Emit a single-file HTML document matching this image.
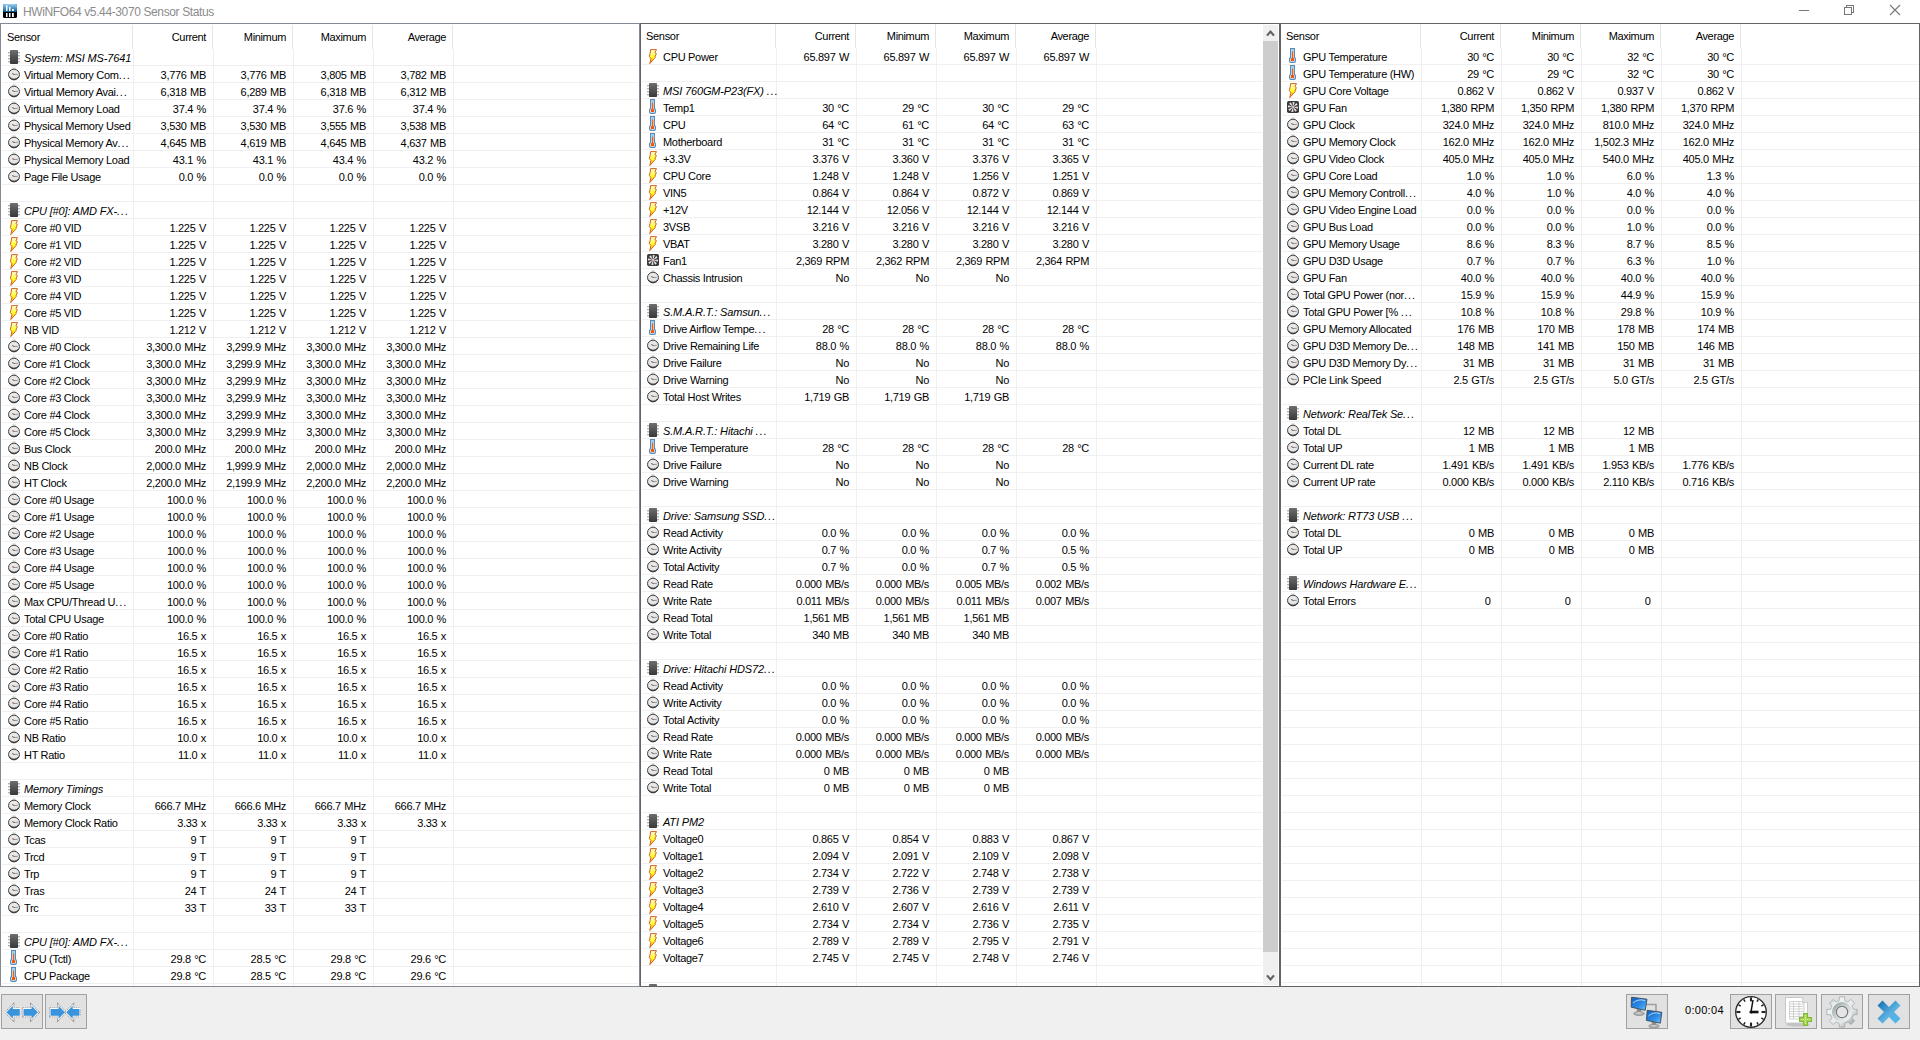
<!DOCTYPE html><html><head><meta charset="utf-8"><title>HWiNFO64 Sensor Status</title><style>html,body{margin:0;padding:0;width:1920px;height:1040px;overflow:hidden;background:#fff;position:relative;font-family:'Liberation Sans', sans-serif}.n,.v,.g,.h{position:absolute;font-size:11px;line-height:17px;height:17px;white-space:nowrap;color:#000;letter-spacing:-0.3px}.v{letter-spacing:-0.3px;word-spacing:0.7px}.h{letter-spacing:-0.35px}.g{font-style:italic;letter-spacing:-0.15px}.e{letter-spacing:1px}</style></head><body>
<svg width="0" height="0" style="position:absolute">
<defs>
<linearGradient id="chipg" x1="0" y1="0" x2="0" y2="1"><stop offset="0" stop-color="#6e6e6e"/><stop offset="1" stop-color="#383838"/></linearGradient>
<linearGradient id="boltg" x1="0" y1="0" x2="0" y2="1"><stop offset="0" stop-color="#fffbe0"/><stop offset="0.55" stop-color="#ffff20"/><stop offset="1" stop-color="#ff9a00"/></linearGradient>
<radialGradient id="clockg" cx="0.5" cy="0.4" r="0.6"><stop offset="0" stop-color="#f4f4f4"/><stop offset="1" stop-color="#d8d8d8"/></radialGradient>
<symbol id="ic" viewBox="0 0 16 16">
<rect x="5.2" y="1.3" width="3.6" height="2" rx="0.6" fill="#dadada"/>
<ellipse cx="7" cy="8.55" rx="5.5" ry="5.35" fill="url(#clockg)" stroke="#444" stroke-width="1"/>
<path d="M2.3,11 Q7,15.6 11.7,11" stroke="#1e1e1e" stroke-width="0.9" fill="none"/>
<path d="M5.2,7.6 L7.3,8.4" stroke="#4a4a4a" stroke-width="1"/>
<path d="M7.3,8.4 L10.8,8.4" stroke="#8a8a8a" stroke-width="0.9"/>
<path d="M7.3,8.4 L7.1,5.4" stroke="#f4d4c0" stroke-width="0.7"/>
<path d="M6.8,8.6 L7.9,8.6" stroke="#a06040" stroke-width="1"/>
</symbol>
<symbol id="ig" viewBox="0 0 16 16">
<g fill="#b4b4b4"><rect x="1" y="3" width="2" height="1.4"/><rect x="1" y="6" width="2" height="1.4"/><rect x="1" y="9" width="2" height="1.4"/><rect x="1" y="12" width="2" height="1.4"/>
<rect x="11" y="3" width="2" height="1.4"/><rect x="11" y="6" width="2" height="1.4"/><rect x="11" y="9" width="2" height="1.4"/><rect x="11" y="12" width="2" height="1.4"/></g>
<rect x="3" y="1" width="8" height="14" rx="0.8" fill="url(#chipg)"/>
</symbol>
<symbol id="it" viewBox="0 0 16 16">
<path d="M4.6,0.6 H8.4 V9.4 Q9.4,9.8 9.4,11 V13 Q9.4,14.4 8,14.4 H5 Q3.6,14.4 3.6,13 V11 Q3.6,9.8 4.6,9.4 Z" fill="#d4f2ff" stroke="#5a8ab4" stroke-width="1.2"/>
<rect x="5.9" y="2.2" width="1.2" height="1.8" fill="#78b0e0"/>
<rect x="5.9" y="3.9" width="1.3" height="7" fill="#ff5a00"/>
<rect x="5" y="10" width="3" height="3" rx="0.5" fill="#ff5000"/>
</symbol>
<symbol id="ib" viewBox="0 0 16 16">
<path d="M4.6,1.6 L10.5,1.6 L8.9,4.7 L10.4,5.6 L8.9,9 L9.3,9.3 L3.8,15.6 L4.9,10.6 L3.3,8.4 L4.2,5.2 Z" fill="url(#boltg)" stroke="#d4641e" stroke-width="1" stroke-linejoin="round"/>
</symbol>
<symbol id="if" viewBox="0 0 16 16">
<rect x="1" y="2" width="12" height="12" rx="1.8" fill="#3a3a3a"/>
<g fill="#e6e6e6">
<path d="M5.9,3 L8.1,3 L7.35,6.4 L6.65,6.4 Z" transform="rotate(8 7 8)"/>
<path d="M5.9,3 L8.1,3 L7.35,6.4 L6.65,6.4 Z" transform="rotate(53 7 8)"/>
<path d="M5.9,3 L8.1,3 L7.35,6.4 L6.65,6.4 Z" transform="rotate(98 7 8)"/>
<path d="M5.9,3 L8.1,3 L7.35,6.4 L6.65,6.4 Z" transform="rotate(143 7 8)"/>
<path d="M5.9,3 L8.1,3 L7.35,6.4 L6.65,6.4 Z" transform="rotate(188 7 8)"/>
<path d="M5.9,3 L8.1,3 L7.35,6.4 L6.65,6.4 Z" transform="rotate(233 7 8)"/>
<path d="M5.9,3 L8.1,3 L7.35,6.4 L6.65,6.4 Z" transform="rotate(278 7 8)"/>
<path d="M5.9,3 L8.1,3 L7.35,6.4 L6.65,6.4 Z" transform="rotate(323 7 8)"/>
</g>
<circle cx="7" cy="8" r="1.5" fill="#c8d4d4" stroke="#b87080" stroke-width="0.55"/>
</symbol>
</defs>
</svg>
<svg style="position:absolute;left:3px;top:4px" width="14" height="14" viewBox="0 0 14 14"><defs><linearGradient id="tg" x1="0" y1="0" x2="0" y2="1"><stop offset="0" stop-color="#9ad2f4"/><stop offset="1" stop-color="#0a5890"/></linearGradient></defs><rect x="0" y="0" width="14" height="14" rx="1.5" fill="#000"/><rect x="0" y="0" width="14" height="8" rx="1.5" fill="url(#tg)"/><g fill="#fff"><rect x="3" y="1.5" width="1.5" height="5.5"/><rect x="6" y="3" width="1.5" height="4"/><rect x="9" y="5" width="1.8" height="2"/><rect x="3" y="9" width="1.5" height="4"/><rect x="6" y="9" width="1.5" height="4"/><rect x="9" y="9" width="1.8" height="4"/></g></svg><div style="position:absolute;left:23px;top:4px;font-size:12px;line-height:17px;color:#8c8c8c;letter-spacing:-0.38px;white-space:nowrap">HWiNFO64 v5.44-3070 Sensor Status</div><div style="position:absolute;left:1799px;top:10px;width:10px;height:1px;background:#777"></div><div style="position:absolute;left:1846px;top:5px;width:6px;height:6px;border:1px solid #777"></div><div style="position:absolute;left:1844px;top:7px;width:6px;height:6px;border:1px solid #777;background:#fff"></div><svg style="position:absolute;left:1889px;top:4px" width="12" height="12"><path d="M1,1 L11,11 M11,1 L1,11" stroke="#777" stroke-width="1.1"/></svg><div style="position:absolute;left:132px;top:25px;width:1px;height:24px;background:#e5e5e5"></div><div style="position:absolute;left:212px;top:25px;width:1px;height:24px;background:#e5e5e5"></div><div style="position:absolute;left:292px;top:25px;width:1px;height:24px;background:#e5e5e5"></div><div style="position:absolute;left:372px;top:25px;width:1px;height:24px;background:#e5e5e5"></div><div style="position:absolute;left:452px;top:25px;width:1px;height:24px;background:#e5e5e5"></div><div class="n" style="left:7px;top:29px">Sensor</div><div class="h" style="right:1714px;top:29px">Current</div><div class="h" style="right:1634px;top:29px">Minimum</div><div class="h" style="right:1554px;top:29px">Maximum</div><div class="h" style="right:1474px;top:29px">Average</div><div style="position:absolute;left:2px;top:65px;width:636px;height:921px;background:repeating-linear-gradient(to bottom,#f0f0f0 0 1px,transparent 1px 17px)"></div><div style="position:absolute;left:133px;top:49px;width:1px;height:937px;background:#f0f0f0"></div><div style="position:absolute;left:213px;top:49px;width:1px;height:937px;background:#f0f0f0"></div><div style="position:absolute;left:293px;top:49px;width:1px;height:937px;background:#f0f0f0"></div><div style="position:absolute;left:373px;top:49px;width:1px;height:937px;background:#f0f0f0"></div><div style="position:absolute;left:453px;top:49px;width:1px;height:937px;background:#f0f0f0"></div><svg style="position:absolute;left:7px;top:49px" width="16" height="16"><use href="#ig"/></svg><div class="g" style="left:24px;top:50px">System: MSI MS-7641</div><svg style="position:absolute;left:7px;top:66px" width="16" height="16"><use href="#ic"/></svg><div class="n" style="left:24px;top:67px">Virtual Memory Com<span class="e">...</span></div><div class="v" style="right:1714px;top:67px">3,776 MB</div><div class="v" style="right:1634px;top:67px">3,776 MB</div><div class="v" style="right:1554px;top:67px">3,805 MB</div><div class="v" style="right:1474px;top:67px">3,782 MB</div><svg style="position:absolute;left:7px;top:83px" width="16" height="16"><use href="#ic"/></svg><div class="n" style="left:24px;top:84px">Virtual Memory Avai<span class="e">...</span></div><div class="v" style="right:1714px;top:84px">6,318 MB</div><div class="v" style="right:1634px;top:84px">6,289 MB</div><div class="v" style="right:1554px;top:84px">6,318 MB</div><div class="v" style="right:1474px;top:84px">6,312 MB</div><svg style="position:absolute;left:7px;top:100px" width="16" height="16"><use href="#ic"/></svg><div class="n" style="left:24px;top:101px">Virtual Memory Load</div><div class="v" style="right:1714px;top:101px">37.4 %</div><div class="v" style="right:1634px;top:101px">37.4 %</div><div class="v" style="right:1554px;top:101px">37.6 %</div><div class="v" style="right:1474px;top:101px">37.4 %</div><svg style="position:absolute;left:7px;top:117px" width="16" height="16"><use href="#ic"/></svg><div class="n" style="left:24px;top:118px">Physical Memory Used</div><div class="v" style="right:1714px;top:118px">3,530 MB</div><div class="v" style="right:1634px;top:118px">3,530 MB</div><div class="v" style="right:1554px;top:118px">3,555 MB</div><div class="v" style="right:1474px;top:118px">3,538 MB</div><svg style="position:absolute;left:7px;top:134px" width="16" height="16"><use href="#ic"/></svg><div class="n" style="left:24px;top:135px">Physical Memory Av<span class="e">...</span></div><div class="v" style="right:1714px;top:135px">4,645 MB</div><div class="v" style="right:1634px;top:135px">4,619 MB</div><div class="v" style="right:1554px;top:135px">4,645 MB</div><div class="v" style="right:1474px;top:135px">4,637 MB</div><svg style="position:absolute;left:7px;top:151px" width="16" height="16"><use href="#ic"/></svg><div class="n" style="left:24px;top:152px">Physical Memory Load</div><div class="v" style="right:1714px;top:152px">43.1 %</div><div class="v" style="right:1634px;top:152px">43.1 %</div><div class="v" style="right:1554px;top:152px">43.4 %</div><div class="v" style="right:1474px;top:152px">43.2 %</div><svg style="position:absolute;left:7px;top:168px" width="16" height="16"><use href="#ic"/></svg><div class="n" style="left:24px;top:169px">Page File Usage</div><div class="v" style="right:1714px;top:169px">0.0 %</div><div class="v" style="right:1634px;top:169px">0.0 %</div><div class="v" style="right:1554px;top:169px">0.0 %</div><div class="v" style="right:1474px;top:169px">0.0 %</div><svg style="position:absolute;left:7px;top:202px" width="16" height="16"><use href="#ig"/></svg><div class="g" style="left:24px;top:203px">CPU [#0]: AMD FX-<span class="e">...</span></div><svg style="position:absolute;left:7px;top:219px" width="16" height="16"><use href="#ib"/></svg><div class="n" style="left:24px;top:220px">Core #0 VID</div><div class="v" style="right:1714px;top:220px">1.225 V</div><div class="v" style="right:1634px;top:220px">1.225 V</div><div class="v" style="right:1554px;top:220px">1.225 V</div><div class="v" style="right:1474px;top:220px">1.225 V</div><svg style="position:absolute;left:7px;top:236px" width="16" height="16"><use href="#ib"/></svg><div class="n" style="left:24px;top:237px">Core #1 VID</div><div class="v" style="right:1714px;top:237px">1.225 V</div><div class="v" style="right:1634px;top:237px">1.225 V</div><div class="v" style="right:1554px;top:237px">1.225 V</div><div class="v" style="right:1474px;top:237px">1.225 V</div><svg style="position:absolute;left:7px;top:253px" width="16" height="16"><use href="#ib"/></svg><div class="n" style="left:24px;top:254px">Core #2 VID</div><div class="v" style="right:1714px;top:254px">1.225 V</div><div class="v" style="right:1634px;top:254px">1.225 V</div><div class="v" style="right:1554px;top:254px">1.225 V</div><div class="v" style="right:1474px;top:254px">1.225 V</div><svg style="position:absolute;left:7px;top:270px" width="16" height="16"><use href="#ib"/></svg><div class="n" style="left:24px;top:271px">Core #3 VID</div><div class="v" style="right:1714px;top:271px">1.225 V</div><div class="v" style="right:1634px;top:271px">1.225 V</div><div class="v" style="right:1554px;top:271px">1.225 V</div><div class="v" style="right:1474px;top:271px">1.225 V</div><svg style="position:absolute;left:7px;top:287px" width="16" height="16"><use href="#ib"/></svg><div class="n" style="left:24px;top:288px">Core #4 VID</div><div class="v" style="right:1714px;top:288px">1.225 V</div><div class="v" style="right:1634px;top:288px">1.225 V</div><div class="v" style="right:1554px;top:288px">1.225 V</div><div class="v" style="right:1474px;top:288px">1.225 V</div><svg style="position:absolute;left:7px;top:304px" width="16" height="16"><use href="#ib"/></svg><div class="n" style="left:24px;top:305px">Core #5 VID</div><div class="v" style="right:1714px;top:305px">1.225 V</div><div class="v" style="right:1634px;top:305px">1.225 V</div><div class="v" style="right:1554px;top:305px">1.225 V</div><div class="v" style="right:1474px;top:305px">1.225 V</div><svg style="position:absolute;left:7px;top:321px" width="16" height="16"><use href="#ib"/></svg><div class="n" style="left:24px;top:322px">NB VID</div><div class="v" style="right:1714px;top:322px">1.212 V</div><div class="v" style="right:1634px;top:322px">1.212 V</div><div class="v" style="right:1554px;top:322px">1.212 V</div><div class="v" style="right:1474px;top:322px">1.212 V</div><svg style="position:absolute;left:7px;top:338px" width="16" height="16"><use href="#ic"/></svg><div class="n" style="left:24px;top:339px">Core #0 Clock</div><div class="v" style="right:1714px;top:339px">3,300.0 MHz</div><div class="v" style="right:1634px;top:339px">3,299.9 MHz</div><div class="v" style="right:1554px;top:339px">3,300.0 MHz</div><div class="v" style="right:1474px;top:339px">3,300.0 MHz</div><svg style="position:absolute;left:7px;top:355px" width="16" height="16"><use href="#ic"/></svg><div class="n" style="left:24px;top:356px">Core #1 Clock</div><div class="v" style="right:1714px;top:356px">3,300.0 MHz</div><div class="v" style="right:1634px;top:356px">3,299.9 MHz</div><div class="v" style="right:1554px;top:356px">3,300.0 MHz</div><div class="v" style="right:1474px;top:356px">3,300.0 MHz</div><svg style="position:absolute;left:7px;top:372px" width="16" height="16"><use href="#ic"/></svg><div class="n" style="left:24px;top:373px">Core #2 Clock</div><div class="v" style="right:1714px;top:373px">3,300.0 MHz</div><div class="v" style="right:1634px;top:373px">3,299.9 MHz</div><div class="v" style="right:1554px;top:373px">3,300.0 MHz</div><div class="v" style="right:1474px;top:373px">3,300.0 MHz</div><svg style="position:absolute;left:7px;top:389px" width="16" height="16"><use href="#ic"/></svg><div class="n" style="left:24px;top:390px">Core #3 Clock</div><div class="v" style="right:1714px;top:390px">3,300.0 MHz</div><div class="v" style="right:1634px;top:390px">3,299.9 MHz</div><div class="v" style="right:1554px;top:390px">3,300.0 MHz</div><div class="v" style="right:1474px;top:390px">3,300.0 MHz</div><svg style="position:absolute;left:7px;top:406px" width="16" height="16"><use href="#ic"/></svg><div class="n" style="left:24px;top:407px">Core #4 Clock</div><div class="v" style="right:1714px;top:407px">3,300.0 MHz</div><div class="v" style="right:1634px;top:407px">3,299.9 MHz</div><div class="v" style="right:1554px;top:407px">3,300.0 MHz</div><div class="v" style="right:1474px;top:407px">3,300.0 MHz</div><svg style="position:absolute;left:7px;top:423px" width="16" height="16"><use href="#ic"/></svg><div class="n" style="left:24px;top:424px">Core #5 Clock</div><div class="v" style="right:1714px;top:424px">3,300.0 MHz</div><div class="v" style="right:1634px;top:424px">3,299.9 MHz</div><div class="v" style="right:1554px;top:424px">3,300.0 MHz</div><div class="v" style="right:1474px;top:424px">3,300.0 MHz</div><svg style="position:absolute;left:7px;top:440px" width="16" height="16"><use href="#ic"/></svg><div class="n" style="left:24px;top:441px">Bus Clock</div><div class="v" style="right:1714px;top:441px">200.0 MHz</div><div class="v" style="right:1634px;top:441px">200.0 MHz</div><div class="v" style="right:1554px;top:441px">200.0 MHz</div><div class="v" style="right:1474px;top:441px">200.0 MHz</div><svg style="position:absolute;left:7px;top:457px" width="16" height="16"><use href="#ic"/></svg><div class="n" style="left:24px;top:458px">NB Clock</div><div class="v" style="right:1714px;top:458px">2,000.0 MHz</div><div class="v" style="right:1634px;top:458px">1,999.9 MHz</div><div class="v" style="right:1554px;top:458px">2,000.0 MHz</div><div class="v" style="right:1474px;top:458px">2,000.0 MHz</div><svg style="position:absolute;left:7px;top:474px" width="16" height="16"><use href="#ic"/></svg><div class="n" style="left:24px;top:475px">HT Clock</div><div class="v" style="right:1714px;top:475px">2,200.0 MHz</div><div class="v" style="right:1634px;top:475px">2,199.9 MHz</div><div class="v" style="right:1554px;top:475px">2,200.0 MHz</div><div class="v" style="right:1474px;top:475px">2,200.0 MHz</div><svg style="position:absolute;left:7px;top:491px" width="16" height="16"><use href="#ic"/></svg><div class="n" style="left:24px;top:492px">Core #0 Usage</div><div class="v" style="right:1714px;top:492px">100.0 %</div><div class="v" style="right:1634px;top:492px">100.0 %</div><div class="v" style="right:1554px;top:492px">100.0 %</div><div class="v" style="right:1474px;top:492px">100.0 %</div><svg style="position:absolute;left:7px;top:508px" width="16" height="16"><use href="#ic"/></svg><div class="n" style="left:24px;top:509px">Core #1 Usage</div><div class="v" style="right:1714px;top:509px">100.0 %</div><div class="v" style="right:1634px;top:509px">100.0 %</div><div class="v" style="right:1554px;top:509px">100.0 %</div><div class="v" style="right:1474px;top:509px">100.0 %</div><svg style="position:absolute;left:7px;top:525px" width="16" height="16"><use href="#ic"/></svg><div class="n" style="left:24px;top:526px">Core #2 Usage</div><div class="v" style="right:1714px;top:526px">100.0 %</div><div class="v" style="right:1634px;top:526px">100.0 %</div><div class="v" style="right:1554px;top:526px">100.0 %</div><div class="v" style="right:1474px;top:526px">100.0 %</div><svg style="position:absolute;left:7px;top:542px" width="16" height="16"><use href="#ic"/></svg><div class="n" style="left:24px;top:543px">Core #3 Usage</div><div class="v" style="right:1714px;top:543px">100.0 %</div><div class="v" style="right:1634px;top:543px">100.0 %</div><div class="v" style="right:1554px;top:543px">100.0 %</div><div class="v" style="right:1474px;top:543px">100.0 %</div><svg style="position:absolute;left:7px;top:559px" width="16" height="16"><use href="#ic"/></svg><div class="n" style="left:24px;top:560px">Core #4 Usage</div><div class="v" style="right:1714px;top:560px">100.0 %</div><div class="v" style="right:1634px;top:560px">100.0 %</div><div class="v" style="right:1554px;top:560px">100.0 %</div><div class="v" style="right:1474px;top:560px">100.0 %</div><svg style="position:absolute;left:7px;top:576px" width="16" height="16"><use href="#ic"/></svg><div class="n" style="left:24px;top:577px">Core #5 Usage</div><div class="v" style="right:1714px;top:577px">100.0 %</div><div class="v" style="right:1634px;top:577px">100.0 %</div><div class="v" style="right:1554px;top:577px">100.0 %</div><div class="v" style="right:1474px;top:577px">100.0 %</div><svg style="position:absolute;left:7px;top:593px" width="16" height="16"><use href="#ic"/></svg><div class="n" style="left:24px;top:594px">Max CPU/Thread U<span class="e">...</span></div><div class="v" style="right:1714px;top:594px">100.0 %</div><div class="v" style="right:1634px;top:594px">100.0 %</div><div class="v" style="right:1554px;top:594px">100.0 %</div><div class="v" style="right:1474px;top:594px">100.0 %</div><svg style="position:absolute;left:7px;top:610px" width="16" height="16"><use href="#ic"/></svg><div class="n" style="left:24px;top:611px">Total CPU Usage</div><div class="v" style="right:1714px;top:611px">100.0 %</div><div class="v" style="right:1634px;top:611px">100.0 %</div><div class="v" style="right:1554px;top:611px">100.0 %</div><div class="v" style="right:1474px;top:611px">100.0 %</div><svg style="position:absolute;left:7px;top:627px" width="16" height="16"><use href="#ic"/></svg><div class="n" style="left:24px;top:628px">Core #0 Ratio</div><div class="v" style="right:1714px;top:628px">16.5 x</div><div class="v" style="right:1634px;top:628px">16.5 x</div><div class="v" style="right:1554px;top:628px">16.5 x</div><div class="v" style="right:1474px;top:628px">16.5 x</div><svg style="position:absolute;left:7px;top:644px" width="16" height="16"><use href="#ic"/></svg><div class="n" style="left:24px;top:645px">Core #1 Ratio</div><div class="v" style="right:1714px;top:645px">16.5 x</div><div class="v" style="right:1634px;top:645px">16.5 x</div><div class="v" style="right:1554px;top:645px">16.5 x</div><div class="v" style="right:1474px;top:645px">16.5 x</div><svg style="position:absolute;left:7px;top:661px" width="16" height="16"><use href="#ic"/></svg><div class="n" style="left:24px;top:662px">Core #2 Ratio</div><div class="v" style="right:1714px;top:662px">16.5 x</div><div class="v" style="right:1634px;top:662px">16.5 x</div><div class="v" style="right:1554px;top:662px">16.5 x</div><div class="v" style="right:1474px;top:662px">16.5 x</div><svg style="position:absolute;left:7px;top:678px" width="16" height="16"><use href="#ic"/></svg><div class="n" style="left:24px;top:679px">Core #3 Ratio</div><div class="v" style="right:1714px;top:679px">16.5 x</div><div class="v" style="right:1634px;top:679px">16.5 x</div><div class="v" style="right:1554px;top:679px">16.5 x</div><div class="v" style="right:1474px;top:679px">16.5 x</div><svg style="position:absolute;left:7px;top:695px" width="16" height="16"><use href="#ic"/></svg><div class="n" style="left:24px;top:696px">Core #4 Ratio</div><div class="v" style="right:1714px;top:696px">16.5 x</div><div class="v" style="right:1634px;top:696px">16.5 x</div><div class="v" style="right:1554px;top:696px">16.5 x</div><div class="v" style="right:1474px;top:696px">16.5 x</div><svg style="position:absolute;left:7px;top:712px" width="16" height="16"><use href="#ic"/></svg><div class="n" style="left:24px;top:713px">Core #5 Ratio</div><div class="v" style="right:1714px;top:713px">16.5 x</div><div class="v" style="right:1634px;top:713px">16.5 x</div><div class="v" style="right:1554px;top:713px">16.5 x</div><div class="v" style="right:1474px;top:713px">16.5 x</div><svg style="position:absolute;left:7px;top:729px" width="16" height="16"><use href="#ic"/></svg><div class="n" style="left:24px;top:730px">NB Ratio</div><div class="v" style="right:1714px;top:730px">10.0 x</div><div class="v" style="right:1634px;top:730px">10.0 x</div><div class="v" style="right:1554px;top:730px">10.0 x</div><div class="v" style="right:1474px;top:730px">10.0 x</div><svg style="position:absolute;left:7px;top:746px" width="16" height="16"><use href="#ic"/></svg><div class="n" style="left:24px;top:747px">HT Ratio</div><div class="v" style="right:1714px;top:747px">11.0 x</div><div class="v" style="right:1634px;top:747px">11.0 x</div><div class="v" style="right:1554px;top:747px">11.0 x</div><div class="v" style="right:1474px;top:747px">11.0 x</div><svg style="position:absolute;left:7px;top:780px" width="16" height="16"><use href="#ig"/></svg><div class="g" style="left:24px;top:781px">Memory Timings</div><svg style="position:absolute;left:7px;top:797px" width="16" height="16"><use href="#ic"/></svg><div class="n" style="left:24px;top:798px">Memory Clock</div><div class="v" style="right:1714px;top:798px">666.7 MHz</div><div class="v" style="right:1634px;top:798px">666.6 MHz</div><div class="v" style="right:1554px;top:798px">666.7 MHz</div><div class="v" style="right:1474px;top:798px">666.7 MHz</div><svg style="position:absolute;left:7px;top:814px" width="16" height="16"><use href="#ic"/></svg><div class="n" style="left:24px;top:815px">Memory Clock Ratio</div><div class="v" style="right:1714px;top:815px">3.33 x</div><div class="v" style="right:1634px;top:815px">3.33 x</div><div class="v" style="right:1554px;top:815px">3.33 x</div><div class="v" style="right:1474px;top:815px">3.33 x</div><svg style="position:absolute;left:7px;top:831px" width="16" height="16"><use href="#ic"/></svg><div class="n" style="left:24px;top:832px">Tcas</div><div class="v" style="right:1714px;top:832px">9 T</div><div class="v" style="right:1634px;top:832px">9 T</div><div class="v" style="right:1554px;top:832px">9 T</div><svg style="position:absolute;left:7px;top:848px" width="16" height="16"><use href="#ic"/></svg><div class="n" style="left:24px;top:849px">Trcd</div><div class="v" style="right:1714px;top:849px">9 T</div><div class="v" style="right:1634px;top:849px">9 T</div><div class="v" style="right:1554px;top:849px">9 T</div><svg style="position:absolute;left:7px;top:865px" width="16" height="16"><use href="#ic"/></svg><div class="n" style="left:24px;top:866px">Trp</div><div class="v" style="right:1714px;top:866px">9 T</div><div class="v" style="right:1634px;top:866px">9 T</div><div class="v" style="right:1554px;top:866px">9 T</div><svg style="position:absolute;left:7px;top:882px" width="16" height="16"><use href="#ic"/></svg><div class="n" style="left:24px;top:883px">Tras</div><div class="v" style="right:1714px;top:883px">24 T</div><div class="v" style="right:1634px;top:883px">24 T</div><div class="v" style="right:1554px;top:883px">24 T</div><svg style="position:absolute;left:7px;top:899px" width="16" height="16"><use href="#ic"/></svg><div class="n" style="left:24px;top:900px">Trc</div><div class="v" style="right:1714px;top:900px">33 T</div><div class="v" style="right:1634px;top:900px">33 T</div><div class="v" style="right:1554px;top:900px">33 T</div><svg style="position:absolute;left:7px;top:933px" width="16" height="16"><use href="#ig"/></svg><div class="g" style="left:24px;top:934px">CPU [#0]: AMD FX-<span class="e">...</span></div><svg style="position:absolute;left:7px;top:950px" width="16" height="16"><use href="#it"/></svg><div class="n" style="left:24px;top:951px">CPU (Tctl)</div><div class="v" style="right:1714px;top:951px">29.8 °C</div><div class="v" style="right:1634px;top:951px">28.5 °C</div><div class="v" style="right:1554px;top:951px">29.8 °C</div><div class="v" style="right:1474px;top:951px">29.6 °C</div><svg style="position:absolute;left:7px;top:967px" width="16" height="16"><use href="#it"/></svg><div class="n" style="left:24px;top:968px">CPU Package</div><div class="v" style="right:1714px;top:968px">29.8 °C</div><div class="v" style="right:1634px;top:968px">28.5 °C</div><div class="v" style="right:1554px;top:968px">29.8 °C</div><div class="v" style="right:1474px;top:968px">29.6 °C</div><div style="position:absolute;left:775px;top:24px;width:1px;height:24px;background:#e5e5e5"></div><div style="position:absolute;left:855px;top:24px;width:1px;height:24px;background:#e5e5e5"></div><div style="position:absolute;left:935px;top:24px;width:1px;height:24px;background:#e5e5e5"></div><div style="position:absolute;left:1015px;top:24px;width:1px;height:24px;background:#e5e5e5"></div><div style="position:absolute;left:1095px;top:24px;width:1px;height:24px;background:#e5e5e5"></div><div class="n" style="left:646px;top:28px">Sensor</div><div class="h" style="right:1071px;top:28px">Current</div><div class="h" style="right:991px;top:28px">Minimum</div><div class="h" style="right:911px;top:28px">Maximum</div><div class="h" style="right:831px;top:28px">Average</div><div style="position:absolute;left:642px;top:64px;width:620px;height:922px;background:repeating-linear-gradient(to bottom,#f0f0f0 0 1px,transparent 1px 17px)"></div><div style="position:absolute;left:776px;top:48px;width:1px;height:938px;background:#f0f0f0"></div><div style="position:absolute;left:856px;top:48px;width:1px;height:938px;background:#f0f0f0"></div><div style="position:absolute;left:936px;top:48px;width:1px;height:938px;background:#f0f0f0"></div><div style="position:absolute;left:1016px;top:48px;width:1px;height:938px;background:#f0f0f0"></div><div style="position:absolute;left:1096px;top:48px;width:1px;height:938px;background:#f0f0f0"></div><svg style="position:absolute;left:646px;top:48px" width="16" height="16"><use href="#ib"/></svg><div class="n" style="left:663px;top:49px">CPU Power</div><div class="v" style="right:1071px;top:49px">65.897 W</div><div class="v" style="right:991px;top:49px">65.897 W</div><div class="v" style="right:911px;top:49px">65.897 W</div><div class="v" style="right:831px;top:49px">65.897 W</div><svg style="position:absolute;left:646px;top:82px" width="16" height="16"><use href="#ig"/></svg><div class="g" style="left:663px;top:83px">MSI 760GM-P23(FX) <span class="e">...</span></div><svg style="position:absolute;left:646px;top:99px" width="16" height="16"><use href="#it"/></svg><div class="n" style="left:663px;top:100px">Temp1</div><div class="v" style="right:1071px;top:100px">30 °C</div><div class="v" style="right:991px;top:100px">29 °C</div><div class="v" style="right:911px;top:100px">30 °C</div><div class="v" style="right:831px;top:100px">29 °C</div><svg style="position:absolute;left:646px;top:116px" width="16" height="16"><use href="#it"/></svg><div class="n" style="left:663px;top:117px">CPU</div><div class="v" style="right:1071px;top:117px">64 °C</div><div class="v" style="right:991px;top:117px">61 °C</div><div class="v" style="right:911px;top:117px">64 °C</div><div class="v" style="right:831px;top:117px">63 °C</div><svg style="position:absolute;left:646px;top:133px" width="16" height="16"><use href="#it"/></svg><div class="n" style="left:663px;top:134px">Motherboard</div><div class="v" style="right:1071px;top:134px">31 °C</div><div class="v" style="right:991px;top:134px">31 °C</div><div class="v" style="right:911px;top:134px">31 °C</div><div class="v" style="right:831px;top:134px">31 °C</div><svg style="position:absolute;left:646px;top:150px" width="16" height="16"><use href="#ib"/></svg><div class="n" style="left:663px;top:151px">+3.3V</div><div class="v" style="right:1071px;top:151px">3.376 V</div><div class="v" style="right:991px;top:151px">3.360 V</div><div class="v" style="right:911px;top:151px">3.376 V</div><div class="v" style="right:831px;top:151px">3.365 V</div><svg style="position:absolute;left:646px;top:167px" width="16" height="16"><use href="#ib"/></svg><div class="n" style="left:663px;top:168px">CPU Core</div><div class="v" style="right:1071px;top:168px">1.248 V</div><div class="v" style="right:991px;top:168px">1.248 V</div><div class="v" style="right:911px;top:168px">1.256 V</div><div class="v" style="right:831px;top:168px">1.251 V</div><svg style="position:absolute;left:646px;top:184px" width="16" height="16"><use href="#ib"/></svg><div class="n" style="left:663px;top:185px">VIN5</div><div class="v" style="right:1071px;top:185px">0.864 V</div><div class="v" style="right:991px;top:185px">0.864 V</div><div class="v" style="right:911px;top:185px">0.872 V</div><div class="v" style="right:831px;top:185px">0.869 V</div><svg style="position:absolute;left:646px;top:201px" width="16" height="16"><use href="#ib"/></svg><div class="n" style="left:663px;top:202px">+12V</div><div class="v" style="right:1071px;top:202px">12.144 V</div><div class="v" style="right:991px;top:202px">12.056 V</div><div class="v" style="right:911px;top:202px">12.144 V</div><div class="v" style="right:831px;top:202px">12.144 V</div><svg style="position:absolute;left:646px;top:218px" width="16" height="16"><use href="#ib"/></svg><div class="n" style="left:663px;top:219px">3VSB</div><div class="v" style="right:1071px;top:219px">3.216 V</div><div class="v" style="right:991px;top:219px">3.216 V</div><div class="v" style="right:911px;top:219px">3.216 V</div><div class="v" style="right:831px;top:219px">3.216 V</div><svg style="position:absolute;left:646px;top:235px" width="16" height="16"><use href="#ib"/></svg><div class="n" style="left:663px;top:236px">VBAT</div><div class="v" style="right:1071px;top:236px">3.280 V</div><div class="v" style="right:991px;top:236px">3.280 V</div><div class="v" style="right:911px;top:236px">3.280 V</div><div class="v" style="right:831px;top:236px">3.280 V</div><svg style="position:absolute;left:646px;top:252px" width="16" height="16"><use href="#if"/></svg><div class="n" style="left:663px;top:253px">Fan1</div><div class="v" style="right:1071px;top:253px">2,369 RPM</div><div class="v" style="right:991px;top:253px">2,362 RPM</div><div class="v" style="right:911px;top:253px">2,369 RPM</div><div class="v" style="right:831px;top:253px">2,364 RPM</div><svg style="position:absolute;left:646px;top:269px" width="16" height="16"><use href="#ic"/></svg><div class="n" style="left:663px;top:270px">Chassis Intrusion</div><div class="v" style="right:1071px;top:270px">No</div><div class="v" style="right:991px;top:270px">No</div><div class="v" style="right:911px;top:270px">No</div><svg style="position:absolute;left:646px;top:303px" width="16" height="16"><use href="#ig"/></svg><div class="g" style="left:663px;top:304px">S.M.A.R.T.: Samsun<span class="e">...</span></div><svg style="position:absolute;left:646px;top:320px" width="16" height="16"><use href="#it"/></svg><div class="n" style="left:663px;top:321px">Drive Airflow Tempe<span class="e">...</span></div><div class="v" style="right:1071px;top:321px">28 °C</div><div class="v" style="right:991px;top:321px">28 °C</div><div class="v" style="right:911px;top:321px">28 °C</div><div class="v" style="right:831px;top:321px">28 °C</div><svg style="position:absolute;left:646px;top:337px" width="16" height="16"><use href="#ic"/></svg><div class="n" style="left:663px;top:338px">Drive Remaining Life</div><div class="v" style="right:1071px;top:338px">88.0 %</div><div class="v" style="right:991px;top:338px">88.0 %</div><div class="v" style="right:911px;top:338px">88.0 %</div><div class="v" style="right:831px;top:338px">88.0 %</div><svg style="position:absolute;left:646px;top:354px" width="16" height="16"><use href="#ic"/></svg><div class="n" style="left:663px;top:355px">Drive Failure</div><div class="v" style="right:1071px;top:355px">No</div><div class="v" style="right:991px;top:355px">No</div><div class="v" style="right:911px;top:355px">No</div><svg style="position:absolute;left:646px;top:371px" width="16" height="16"><use href="#ic"/></svg><div class="n" style="left:663px;top:372px">Drive Warning</div><div class="v" style="right:1071px;top:372px">No</div><div class="v" style="right:991px;top:372px">No</div><div class="v" style="right:911px;top:372px">No</div><svg style="position:absolute;left:646px;top:388px" width="16" height="16"><use href="#ic"/></svg><div class="n" style="left:663px;top:389px">Total Host Writes</div><div class="v" style="right:1071px;top:389px">1,719 GB</div><div class="v" style="right:991px;top:389px">1,719 GB</div><div class="v" style="right:911px;top:389px">1,719 GB</div><svg style="position:absolute;left:646px;top:422px" width="16" height="16"><use href="#ig"/></svg><div class="g" style="left:663px;top:423px">S.M.A.R.T.: Hitachi <span class="e">...</span></div><svg style="position:absolute;left:646px;top:439px" width="16" height="16"><use href="#it"/></svg><div class="n" style="left:663px;top:440px">Drive Temperature</div><div class="v" style="right:1071px;top:440px">28 °C</div><div class="v" style="right:991px;top:440px">28 °C</div><div class="v" style="right:911px;top:440px">28 °C</div><div class="v" style="right:831px;top:440px">28 °C</div><svg style="position:absolute;left:646px;top:456px" width="16" height="16"><use href="#ic"/></svg><div class="n" style="left:663px;top:457px">Drive Failure</div><div class="v" style="right:1071px;top:457px">No</div><div class="v" style="right:991px;top:457px">No</div><div class="v" style="right:911px;top:457px">No</div><svg style="position:absolute;left:646px;top:473px" width="16" height="16"><use href="#ic"/></svg><div class="n" style="left:663px;top:474px">Drive Warning</div><div class="v" style="right:1071px;top:474px">No</div><div class="v" style="right:991px;top:474px">No</div><div class="v" style="right:911px;top:474px">No</div><svg style="position:absolute;left:646px;top:507px" width="16" height="16"><use href="#ig"/></svg><div class="g" style="left:663px;top:508px">Drive: Samsung SSD<span class="e">...</span></div><svg style="position:absolute;left:646px;top:524px" width="16" height="16"><use href="#ic"/></svg><div class="n" style="left:663px;top:525px">Read Activity</div><div class="v" style="right:1071px;top:525px">0.0 %</div><div class="v" style="right:991px;top:525px">0.0 %</div><div class="v" style="right:911px;top:525px">0.0 %</div><div class="v" style="right:831px;top:525px">0.0 %</div><svg style="position:absolute;left:646px;top:541px" width="16" height="16"><use href="#ic"/></svg><div class="n" style="left:663px;top:542px">Write Activity</div><div class="v" style="right:1071px;top:542px">0.7 %</div><div class="v" style="right:991px;top:542px">0.0 %</div><div class="v" style="right:911px;top:542px">0.7 %</div><div class="v" style="right:831px;top:542px">0.5 %</div><svg style="position:absolute;left:646px;top:558px" width="16" height="16"><use href="#ic"/></svg><div class="n" style="left:663px;top:559px">Total Activity</div><div class="v" style="right:1071px;top:559px">0.7 %</div><div class="v" style="right:991px;top:559px">0.0 %</div><div class="v" style="right:911px;top:559px">0.7 %</div><div class="v" style="right:831px;top:559px">0.5 %</div><svg style="position:absolute;left:646px;top:575px" width="16" height="16"><use href="#ic"/></svg><div class="n" style="left:663px;top:576px">Read Rate</div><div class="v" style="right:1071px;top:576px">0.000 MB/s</div><div class="v" style="right:991px;top:576px">0.000 MB/s</div><div class="v" style="right:911px;top:576px">0.005 MB/s</div><div class="v" style="right:831px;top:576px">0.002 MB/s</div><svg style="position:absolute;left:646px;top:592px" width="16" height="16"><use href="#ic"/></svg><div class="n" style="left:663px;top:593px">Write Rate</div><div class="v" style="right:1071px;top:593px">0.011 MB/s</div><div class="v" style="right:991px;top:593px">0.000 MB/s</div><div class="v" style="right:911px;top:593px">0.011 MB/s</div><div class="v" style="right:831px;top:593px">0.007 MB/s</div><svg style="position:absolute;left:646px;top:609px" width="16" height="16"><use href="#ic"/></svg><div class="n" style="left:663px;top:610px">Read Total</div><div class="v" style="right:1071px;top:610px">1,561 MB</div><div class="v" style="right:991px;top:610px">1,561 MB</div><div class="v" style="right:911px;top:610px">1,561 MB</div><svg style="position:absolute;left:646px;top:626px" width="16" height="16"><use href="#ic"/></svg><div class="n" style="left:663px;top:627px">Write Total</div><div class="v" style="right:1071px;top:627px">340 MB</div><div class="v" style="right:991px;top:627px">340 MB</div><div class="v" style="right:911px;top:627px">340 MB</div><svg style="position:absolute;left:646px;top:660px" width="16" height="16"><use href="#ig"/></svg><div class="g" style="left:663px;top:661px">Drive: Hitachi HDS72<span class="e">...</span></div><svg style="position:absolute;left:646px;top:677px" width="16" height="16"><use href="#ic"/></svg><div class="n" style="left:663px;top:678px">Read Activity</div><div class="v" style="right:1071px;top:678px">0.0 %</div><div class="v" style="right:991px;top:678px">0.0 %</div><div class="v" style="right:911px;top:678px">0.0 %</div><div class="v" style="right:831px;top:678px">0.0 %</div><svg style="position:absolute;left:646px;top:694px" width="16" height="16"><use href="#ic"/></svg><div class="n" style="left:663px;top:695px">Write Activity</div><div class="v" style="right:1071px;top:695px">0.0 %</div><div class="v" style="right:991px;top:695px">0.0 %</div><div class="v" style="right:911px;top:695px">0.0 %</div><div class="v" style="right:831px;top:695px">0.0 %</div><svg style="position:absolute;left:646px;top:711px" width="16" height="16"><use href="#ic"/></svg><div class="n" style="left:663px;top:712px">Total Activity</div><div class="v" style="right:1071px;top:712px">0.0 %</div><div class="v" style="right:991px;top:712px">0.0 %</div><div class="v" style="right:911px;top:712px">0.0 %</div><div class="v" style="right:831px;top:712px">0.0 %</div><svg style="position:absolute;left:646px;top:728px" width="16" height="16"><use href="#ic"/></svg><div class="n" style="left:663px;top:729px">Read Rate</div><div class="v" style="right:1071px;top:729px">0.000 MB/s</div><div class="v" style="right:991px;top:729px">0.000 MB/s</div><div class="v" style="right:911px;top:729px">0.000 MB/s</div><div class="v" style="right:831px;top:729px">0.000 MB/s</div><svg style="position:absolute;left:646px;top:745px" width="16" height="16"><use href="#ic"/></svg><div class="n" style="left:663px;top:746px">Write Rate</div><div class="v" style="right:1071px;top:746px">0.000 MB/s</div><div class="v" style="right:991px;top:746px">0.000 MB/s</div><div class="v" style="right:911px;top:746px">0.000 MB/s</div><div class="v" style="right:831px;top:746px">0.000 MB/s</div><svg style="position:absolute;left:646px;top:762px" width="16" height="16"><use href="#ic"/></svg><div class="n" style="left:663px;top:763px">Read Total</div><div class="v" style="right:1071px;top:763px">0 MB</div><div class="v" style="right:991px;top:763px">0 MB</div><div class="v" style="right:911px;top:763px">0 MB</div><svg style="position:absolute;left:646px;top:779px" width="16" height="16"><use href="#ic"/></svg><div class="n" style="left:663px;top:780px">Write Total</div><div class="v" style="right:1071px;top:780px">0 MB</div><div class="v" style="right:991px;top:780px">0 MB</div><div class="v" style="right:911px;top:780px">0 MB</div><svg style="position:absolute;left:646px;top:813px" width="16" height="16"><use href="#ig"/></svg><div class="g" style="left:663px;top:814px">ATI PM2</div><svg style="position:absolute;left:646px;top:830px" width="16" height="16"><use href="#ib"/></svg><div class="n" style="left:663px;top:831px">Voltage0</div><div class="v" style="right:1071px;top:831px">0.865 V</div><div class="v" style="right:991px;top:831px">0.854 V</div><div class="v" style="right:911px;top:831px">0.883 V</div><div class="v" style="right:831px;top:831px">0.867 V</div><svg style="position:absolute;left:646px;top:847px" width="16" height="16"><use href="#ib"/></svg><div class="n" style="left:663px;top:848px">Voltage1</div><div class="v" style="right:1071px;top:848px">2.094 V</div><div class="v" style="right:991px;top:848px">2.091 V</div><div class="v" style="right:911px;top:848px">2.109 V</div><div class="v" style="right:831px;top:848px">2.098 V</div><svg style="position:absolute;left:646px;top:864px" width="16" height="16"><use href="#ib"/></svg><div class="n" style="left:663px;top:865px">Voltage2</div><div class="v" style="right:1071px;top:865px">2.734 V</div><div class="v" style="right:991px;top:865px">2.722 V</div><div class="v" style="right:911px;top:865px">2.748 V</div><div class="v" style="right:831px;top:865px">2.738 V</div><svg style="position:absolute;left:646px;top:881px" width="16" height="16"><use href="#ib"/></svg><div class="n" style="left:663px;top:882px">Voltage3</div><div class="v" style="right:1071px;top:882px">2.739 V</div><div class="v" style="right:991px;top:882px">2.736 V</div><div class="v" style="right:911px;top:882px">2.739 V</div><div class="v" style="right:831px;top:882px">2.739 V</div><svg style="position:absolute;left:646px;top:898px" width="16" height="16"><use href="#ib"/></svg><div class="n" style="left:663px;top:899px">Voltage4</div><div class="v" style="right:1071px;top:899px">2.610 V</div><div class="v" style="right:991px;top:899px">2.607 V</div><div class="v" style="right:911px;top:899px">2.616 V</div><div class="v" style="right:831px;top:899px">2.611 V</div><svg style="position:absolute;left:646px;top:915px" width="16" height="16"><use href="#ib"/></svg><div class="n" style="left:663px;top:916px">Voltage5</div><div class="v" style="right:1071px;top:916px">2.734 V</div><div class="v" style="right:991px;top:916px">2.734 V</div><div class="v" style="right:911px;top:916px">2.736 V</div><div class="v" style="right:831px;top:916px">2.735 V</div><svg style="position:absolute;left:646px;top:932px" width="16" height="16"><use href="#ib"/></svg><div class="n" style="left:663px;top:933px">Voltage6</div><div class="v" style="right:1071px;top:933px">2.789 V</div><div class="v" style="right:991px;top:933px">2.789 V</div><div class="v" style="right:911px;top:933px">2.795 V</div><div class="v" style="right:831px;top:933px">2.791 V</div><svg style="position:absolute;left:646px;top:949px" width="16" height="16"><use href="#ib"/></svg><div class="n" style="left:663px;top:950px">Voltage7</div><div class="v" style="right:1071px;top:950px">2.745 V</div><div class="v" style="right:991px;top:950px">2.745 V</div><div class="v" style="right:911px;top:950px">2.748 V</div><div class="v" style="right:831px;top:950px">2.746 V</div><svg style="position:absolute;left:646px;top:983px" width="16" height="16"><use href="#ig"/></svg><div style="position:absolute;left:1420px;top:24px;width:1px;height:24px;background:#e5e5e5"></div><div style="position:absolute;left:1500px;top:24px;width:1px;height:24px;background:#e5e5e5"></div><div style="position:absolute;left:1580px;top:24px;width:1px;height:24px;background:#e5e5e5"></div><div style="position:absolute;left:1660px;top:24px;width:1px;height:24px;background:#e5e5e5"></div><div style="position:absolute;left:1740px;top:24px;width:1px;height:24px;background:#e5e5e5"></div><div class="n" style="left:1286px;top:28px">Sensor</div><div class="h" style="right:426px;top:28px">Current</div><div class="h" style="right:346px;top:28px">Minimum</div><div class="h" style="right:266px;top:28px">Maximum</div><div class="h" style="right:186px;top:28px">Average</div><div style="position:absolute;left:1282px;top:64px;width:637px;height:922px;background:repeating-linear-gradient(to bottom,#f0f0f0 0 1px,transparent 1px 17px)"></div><div style="position:absolute;left:1421px;top:48px;width:1px;height:938px;background:#f0f0f0"></div><div style="position:absolute;left:1501px;top:48px;width:1px;height:938px;background:#f0f0f0"></div><div style="position:absolute;left:1581px;top:48px;width:1px;height:938px;background:#f0f0f0"></div><div style="position:absolute;left:1661px;top:48px;width:1px;height:938px;background:#f0f0f0"></div><div style="position:absolute;left:1741px;top:48px;width:1px;height:938px;background:#f0f0f0"></div><svg style="position:absolute;left:1286px;top:48px" width="16" height="16"><use href="#it"/></svg><div class="n" style="left:1303px;top:49px">GPU Temperature</div><div class="v" style="right:426px;top:49px">30 °C</div><div class="v" style="right:346px;top:49px">30 °C</div><div class="v" style="right:266px;top:49px">32 °C</div><div class="v" style="right:186px;top:49px">30 °C</div><svg style="position:absolute;left:1286px;top:65px" width="16" height="16"><use href="#it"/></svg><div class="n" style="left:1303px;top:66px">GPU Temperature (HW)</div><div class="v" style="right:426px;top:66px">29 °C</div><div class="v" style="right:346px;top:66px">29 °C</div><div class="v" style="right:266px;top:66px">32 °C</div><div class="v" style="right:186px;top:66px">30 °C</div><svg style="position:absolute;left:1286px;top:82px" width="16" height="16"><use href="#ib"/></svg><div class="n" style="left:1303px;top:83px">GPU Core Voltage</div><div class="v" style="right:426px;top:83px">0.862 V</div><div class="v" style="right:346px;top:83px">0.862 V</div><div class="v" style="right:266px;top:83px">0.937 V</div><div class="v" style="right:186px;top:83px">0.862 V</div><svg style="position:absolute;left:1286px;top:99px" width="16" height="16"><use href="#if"/></svg><div class="n" style="left:1303px;top:100px">GPU Fan</div><div class="v" style="right:426px;top:100px">1,380 RPM</div><div class="v" style="right:346px;top:100px">1,350 RPM</div><div class="v" style="right:266px;top:100px">1,380 RPM</div><div class="v" style="right:186px;top:100px">1,370 RPM</div><svg style="position:absolute;left:1286px;top:116px" width="16" height="16"><use href="#ic"/></svg><div class="n" style="left:1303px;top:117px">GPU Clock</div><div class="v" style="right:426px;top:117px">324.0 MHz</div><div class="v" style="right:346px;top:117px">324.0 MHz</div><div class="v" style="right:266px;top:117px">810.0 MHz</div><div class="v" style="right:186px;top:117px">324.0 MHz</div><svg style="position:absolute;left:1286px;top:133px" width="16" height="16"><use href="#ic"/></svg><div class="n" style="left:1303px;top:134px">GPU Memory Clock</div><div class="v" style="right:426px;top:134px">162.0 MHz</div><div class="v" style="right:346px;top:134px">162.0 MHz</div><div class="v" style="right:266px;top:134px">1,502.3 MHz</div><div class="v" style="right:186px;top:134px">162.0 MHz</div><svg style="position:absolute;left:1286px;top:150px" width="16" height="16"><use href="#ic"/></svg><div class="n" style="left:1303px;top:151px">GPU Video Clock</div><div class="v" style="right:426px;top:151px">405.0 MHz</div><div class="v" style="right:346px;top:151px">405.0 MHz</div><div class="v" style="right:266px;top:151px">540.0 MHz</div><div class="v" style="right:186px;top:151px">405.0 MHz</div><svg style="position:absolute;left:1286px;top:167px" width="16" height="16"><use href="#ic"/></svg><div class="n" style="left:1303px;top:168px">GPU Core Load</div><div class="v" style="right:426px;top:168px">1.0 %</div><div class="v" style="right:346px;top:168px">1.0 %</div><div class="v" style="right:266px;top:168px">6.0 %</div><div class="v" style="right:186px;top:168px">1.3 %</div><svg style="position:absolute;left:1286px;top:184px" width="16" height="16"><use href="#ic"/></svg><div class="n" style="left:1303px;top:185px">GPU Memory Controll<span class="e">...</span></div><div class="v" style="right:426px;top:185px">4.0 %</div><div class="v" style="right:346px;top:185px">1.0 %</div><div class="v" style="right:266px;top:185px">4.0 %</div><div class="v" style="right:186px;top:185px">4.0 %</div><svg style="position:absolute;left:1286px;top:201px" width="16" height="16"><use href="#ic"/></svg><div class="n" style="left:1303px;top:202px">GPU Video Engine Load</div><div class="v" style="right:426px;top:202px">0.0 %</div><div class="v" style="right:346px;top:202px">0.0 %</div><div class="v" style="right:266px;top:202px">0.0 %</div><div class="v" style="right:186px;top:202px">0.0 %</div><svg style="position:absolute;left:1286px;top:218px" width="16" height="16"><use href="#ic"/></svg><div class="n" style="left:1303px;top:219px">GPU Bus Load</div><div class="v" style="right:426px;top:219px">0.0 %</div><div class="v" style="right:346px;top:219px">0.0 %</div><div class="v" style="right:266px;top:219px">1.0 %</div><div class="v" style="right:186px;top:219px">0.0 %</div><svg style="position:absolute;left:1286px;top:235px" width="16" height="16"><use href="#ic"/></svg><div class="n" style="left:1303px;top:236px">GPU Memory Usage</div><div class="v" style="right:426px;top:236px">8.6 %</div><div class="v" style="right:346px;top:236px">8.3 %</div><div class="v" style="right:266px;top:236px">8.7 %</div><div class="v" style="right:186px;top:236px">8.5 %</div><svg style="position:absolute;left:1286px;top:252px" width="16" height="16"><use href="#ic"/></svg><div class="n" style="left:1303px;top:253px">GPU D3D Usage</div><div class="v" style="right:426px;top:253px">0.7 %</div><div class="v" style="right:346px;top:253px">0.7 %</div><div class="v" style="right:266px;top:253px">6.3 %</div><div class="v" style="right:186px;top:253px">1.0 %</div><svg style="position:absolute;left:1286px;top:269px" width="16" height="16"><use href="#ic"/></svg><div class="n" style="left:1303px;top:270px">GPU Fan</div><div class="v" style="right:426px;top:270px">40.0 %</div><div class="v" style="right:346px;top:270px">40.0 %</div><div class="v" style="right:266px;top:270px">40.0 %</div><div class="v" style="right:186px;top:270px">40.0 %</div><svg style="position:absolute;left:1286px;top:286px" width="16" height="16"><use href="#ic"/></svg><div class="n" style="left:1303px;top:287px">Total GPU Power (nor<span class="e">...</span></div><div class="v" style="right:426px;top:287px">15.9 %</div><div class="v" style="right:346px;top:287px">15.9 %</div><div class="v" style="right:266px;top:287px">44.9 %</div><div class="v" style="right:186px;top:287px">15.9 %</div><svg style="position:absolute;left:1286px;top:303px" width="16" height="16"><use href="#ic"/></svg><div class="n" style="left:1303px;top:304px">Total GPU Power [% <span class="e">...</span></div><div class="v" style="right:426px;top:304px">10.8 %</div><div class="v" style="right:346px;top:304px">10.8 %</div><div class="v" style="right:266px;top:304px">29.8 %</div><div class="v" style="right:186px;top:304px">10.9 %</div><svg style="position:absolute;left:1286px;top:320px" width="16" height="16"><use href="#ic"/></svg><div class="n" style="left:1303px;top:321px">GPU Memory Allocated</div><div class="v" style="right:426px;top:321px">176 MB</div><div class="v" style="right:346px;top:321px">170 MB</div><div class="v" style="right:266px;top:321px">178 MB</div><div class="v" style="right:186px;top:321px">174 MB</div><svg style="position:absolute;left:1286px;top:337px" width="16" height="16"><use href="#ic"/></svg><div class="n" style="left:1303px;top:338px">GPU D3D Memory De<span class="e">...</span></div><div class="v" style="right:426px;top:338px">148 MB</div><div class="v" style="right:346px;top:338px">141 MB</div><div class="v" style="right:266px;top:338px">150 MB</div><div class="v" style="right:186px;top:338px">146 MB</div><svg style="position:absolute;left:1286px;top:354px" width="16" height="16"><use href="#ic"/></svg><div class="n" style="left:1303px;top:355px">GPU D3D Memory Dy<span class="e">...</span></div><div class="v" style="right:426px;top:355px">31 MB</div><div class="v" style="right:346px;top:355px">31 MB</div><div class="v" style="right:266px;top:355px">31 MB</div><div class="v" style="right:186px;top:355px">31 MB</div><svg style="position:absolute;left:1286px;top:371px" width="16" height="16"><use href="#ic"/></svg><div class="n" style="left:1303px;top:372px">PCIe Link Speed</div><div class="v" style="right:426px;top:372px">2.5 GT/s</div><div class="v" style="right:346px;top:372px">2.5 GT/s</div><div class="v" style="right:266px;top:372px">5.0 GT/s</div><div class="v" style="right:186px;top:372px">2.5 GT/s</div><svg style="position:absolute;left:1286px;top:405px" width="16" height="16"><use href="#ig"/></svg><div class="g" style="left:1303px;top:406px">Network: RealTek Se<span class="e">...</span></div><svg style="position:absolute;left:1286px;top:422px" width="16" height="16"><use href="#ic"/></svg><div class="n" style="left:1303px;top:423px">Total DL</div><div class="v" style="right:426px;top:423px">12 MB</div><div class="v" style="right:346px;top:423px">12 MB</div><div class="v" style="right:266px;top:423px">12 MB</div><svg style="position:absolute;left:1286px;top:439px" width="16" height="16"><use href="#ic"/></svg><div class="n" style="left:1303px;top:440px">Total UP</div><div class="v" style="right:426px;top:440px">1 MB</div><div class="v" style="right:346px;top:440px">1 MB</div><div class="v" style="right:266px;top:440px">1 MB</div><svg style="position:absolute;left:1286px;top:456px" width="16" height="16"><use href="#ic"/></svg><div class="n" style="left:1303px;top:457px">Current DL rate</div><div class="v" style="right:426px;top:457px">1.491 KB/s</div><div class="v" style="right:346px;top:457px">1.491 KB/s</div><div class="v" style="right:266px;top:457px">1.953 KB/s</div><div class="v" style="right:186px;top:457px">1.776 KB/s</div><svg style="position:absolute;left:1286px;top:473px" width="16" height="16"><use href="#ic"/></svg><div class="n" style="left:1303px;top:474px">Current UP rate</div><div class="v" style="right:426px;top:474px">0.000 KB/s</div><div class="v" style="right:346px;top:474px">0.000 KB/s</div><div class="v" style="right:266px;top:474px">2.110 KB/s</div><div class="v" style="right:186px;top:474px">0.716 KB/s</div><svg style="position:absolute;left:1286px;top:507px" width="16" height="16"><use href="#ig"/></svg><div class="g" style="left:1303px;top:508px">Network: RT73 USB <span class="e">...</span></div><svg style="position:absolute;left:1286px;top:524px" width="16" height="16"><use href="#ic"/></svg><div class="n" style="left:1303px;top:525px">Total DL</div><div class="v" style="right:426px;top:525px">0 MB</div><div class="v" style="right:346px;top:525px">0 MB</div><div class="v" style="right:266px;top:525px">0 MB</div><svg style="position:absolute;left:1286px;top:541px" width="16" height="16"><use href="#ic"/></svg><div class="n" style="left:1303px;top:542px">Total UP</div><div class="v" style="right:426px;top:542px">0 MB</div><div class="v" style="right:346px;top:542px">0 MB</div><div class="v" style="right:266px;top:542px">0 MB</div><svg style="position:absolute;left:1286px;top:575px" width="16" height="16"><use href="#ig"/></svg><div class="g" style="left:1303px;top:576px">Windows Hardware E<span class="e">...</span></div><svg style="position:absolute;left:1286px;top:592px" width="16" height="16"><use href="#ic"/></svg><div class="n" style="left:1303px;top:593px">Total Errors</div><div class="v" style="right:426px;top:593px">0 </div><div class="v" style="right:346px;top:593px">0 </div><div class="v" style="right:266px;top:593px">0 </div><div style="position:absolute;left:0;top:23px;width:638px;height:962px;border:1px solid #838a96"></div><div style="position:absolute;left:640px;top:23px;width:638px;height:962px;border:1px solid #646464"></div><div style="position:absolute;left:1280px;top:23px;width:638px;height:962px;border:1px solid #646464"></div><div style="position:absolute;left:1263px;top:25px;width:15px;height:960px;background:#f0f0f0"></div><div style="position:absolute;left:1263px;top:41px;width:15px;height:911px;background:#cdcdcd"></div><svg style="position:absolute;left:1263px;top:25px" width="15" height="16"><path d="M4,10.6 L7.5,6.6 L11,10.6" stroke="#606060" stroke-width="2.2" fill="none"/></svg><svg style="position:absolute;left:1263px;top:968px" width="15" height="17"><path d="M4,7.4 L7.5,11.4 L11,7.4" stroke="#606060" stroke-width="2.2" fill="none"/></svg><div style="position:absolute;left:0;top:987px;width:1920px;height:53px;background:#f0f0f0"></div><div style="position:absolute;left:1px;top:994px;width:40px;height:33px;border:1px solid #a0a0a0;background:#e1e1e1"></div><div style="position:absolute;left:45px;top:994px;width:40px;height:33px;border:1px solid #a0a0a0;background:#e1e1e1"></div><div style="position:absolute;left:1626px;top:994px;width:40px;height:33px;border:1px solid #a0a0a0;background:#e1e1e1"></div><div style="position:absolute;left:1730px;top:994px;width:40px;height:33px;border:1px solid #a0a0a0;background:#e1e1e1"></div><div style="position:absolute;left:1775px;top:994px;width:40px;height:33px;border:1px solid #a0a0a0;background:#e1e1e1"></div><div style="position:absolute;left:1821px;top:994px;width:40px;height:33px;border:1px solid #a0a0a0;background:#e1e1e1"></div><div style="position:absolute;left:1868px;top:994px;width:40px;height:33px;border:1px solid #a0a0a0;background:#e1e1e1"></div>
<svg style="position:absolute;left:1px;top:994px" width="42" height="35" viewBox="0 0 42 35"><path d="M5.3,18.3 L11.8,11.8 L11.8,14.9 L18.8,14.9 L18.8,21.7 L11.8,21.7 L11.8,24.8 Z" fill="none" stroke="#8a8a8a" stroke-width="3" stroke-dasharray="1.2 1" stroke-linejoin="miter"/><path d="M5.3,18.3 L11.8,11.8 L11.8,14.9 L18.8,14.9 L18.8,21.7 L11.8,21.7 L11.8,24.8 Z" fill="none" stroke="#fff" stroke-width="1.6" stroke-linejoin="miter"/><path d="M5.3,18.3 L11.8,11.8 L11.8,14.9 L18.8,14.9 L18.8,21.7 L11.8,21.7 L11.8,24.8 Z" fill="#3a94dc"/><path d="M37,18.3 L30.5,11.8 L30.5,14.9 L22.5,14.9 L22.5,21.7 L30.5,21.7 L30.5,24.8 Z" fill="none" stroke="#8a8a8a" stroke-width="3" stroke-dasharray="1.2 1" stroke-linejoin="miter"/><path d="M37,18.3 L30.5,11.8 L30.5,14.9 L22.5,14.9 L22.5,21.7 L30.5,21.7 L30.5,24.8 Z" fill="none" stroke="#fff" stroke-width="1.6" stroke-linejoin="miter"/><path d="M37,18.3 L30.5,11.8 L30.5,14.9 L22.5,14.9 L22.5,21.7 L30.5,21.7 L30.5,24.8 Z" fill="#3a94dc"/></svg>
<svg style="position:absolute;left:45px;top:994px" width="42" height="35" viewBox="0 0 42 35"><path d="M20,18.3 L13.5,11.8 L13.5,14.9 L5.5,14.9 L5.5,21.7 L13.5,21.7 L13.5,24.8 Z" fill="none" stroke="#8a8a8a" stroke-width="3" stroke-dasharray="1.2 1" stroke-linejoin="miter"/><path d="M20,18.3 L13.5,11.8 L13.5,14.9 L5.5,14.9 L5.5,21.7 L13.5,21.7 L13.5,24.8 Z" fill="none" stroke="#fff" stroke-width="1.6" stroke-linejoin="miter"/><path d="M20,18.3 L13.5,11.8 L13.5,14.9 L5.5,14.9 L5.5,21.7 L13.5,21.7 L13.5,24.8 Z" fill="#3a94dc"/><path d="M21.2,18.3 L27.7,11.8 L27.7,14.9 L34.5,14.9 L34.5,21.7 L27.7,21.7 L27.7,24.8 Z" fill="none" stroke="#8a8a8a" stroke-width="3" stroke-dasharray="1.2 1" stroke-linejoin="miter"/><path d="M21.2,18.3 L27.7,11.8 L27.7,14.9 L34.5,14.9 L34.5,21.7 L27.7,21.7 L27.7,24.8 Z" fill="none" stroke="#fff" stroke-width="1.6" stroke-linejoin="miter"/><path d="M21.2,18.3 L27.7,11.8 L27.7,14.9 L34.5,14.9 L34.5,21.7 L27.7,21.7 L27.7,24.8 Z" fill="#3a94dc"/></svg>

<svg style="position:absolute;left:1620px;top:990px" width="300" height="45" viewBox="1620 990 300 45">
<defs>
<linearGradient id="scr" x1="0" y1="0" x2="1" y2="1"><stop offset="0" stop-color="#0f5fc0"/><stop offset="0.6" stop-color="#2f8ee8"/><stop offset="1" stop-color="#6cc4f8"/></linearGradient>
<radialGradient id="stand" cx="0.5" cy="0.4" r="0.6"><stop offset="0" stop-color="#d8d8d8"/><stop offset="1" stop-color="#8a8a8a"/></radialGradient>
<linearGradient id="gearg" x1="0" y1="0" x2="1" y2="1"><stop offset="0" stop-color="#a8b0b0"/><stop offset="0.25" stop-color="#eef2f2"/><stop offset="0.65" stop-color="#e4e8e8"/><stop offset="1" stop-color="#7e8888"/></linearGradient><linearGradient id="ringg" x1="0" y1="0" x2="1" y2="1"><stop offset="0" stop-color="#9aa2a2"/><stop offset="0.5" stop-color="#d0d6d6"/><stop offset="1" stop-color="#f4f6f6"/></linearGradient>
<linearGradient id="xg" x1="0" y1="0" x2="1" y2="1"><stop offset="0" stop-color="#0e6aaa"/><stop offset="0.55" stop-color="#5ab0e0"/><stop offset="1" stop-color="#48b8f0"/></linearGradient>
</defs>
<path d="M1646,1004.5 H1656 V1011" stroke="#a0a0a0" stroke-width="1.6" fill="none"/>
<ellipse cx="1639" cy="1013.5" rx="5.5" ry="2.5" fill="url(#stand)"/>
<path d="M1637,1009 L1641,1009 L1641.5,1012 L1636.5,1012 Z" fill="#909090"/>
<path d="M1631.5,997.2 L1647,999.2 L1645.2,1010.3 L1631.2,1007.2 Z" fill="url(#scr)" stroke="#3a4a5a" stroke-width="0.9"/>
<path d="M1633,1003 Q1638,998.5 1645,1000.5" stroke="#d8eeff" stroke-width="1" fill="none" opacity="0.8"/>
<ellipse cx="1654" cy="1026" rx="5.5" ry="2.5" fill="url(#stand)"/>
<path d="M1652,1022 L1656,1022 L1656.5,1025 L1651.5,1025 Z" fill="#909090"/>
<path d="M1647.2,1010.3 L1661.8,1012.3 L1660.4,1023.2 L1646.4,1020.4 Z" fill="url(#scr)" stroke="#3a4a5a" stroke-width="0.9"/>
<path d="M1648.5,1016 Q1653,1011.5 1660,1013.5" stroke="#d8eeff" stroke-width="1" fill="none" opacity="0.8"/>
<circle cx="1751" cy="1012" r="15.3" fill="#fff" stroke="#2a2a2a" stroke-width="1.3"/>
<path d="M1751.00,1001.40 L1751.00,997.40" stroke="#222" stroke-width="2.1"/><path d="M1756.95,1001.69 L1758.30,999.36" stroke="#222" stroke-width="1.5"/><path d="M1761.31,1006.05 L1763.64,1004.70" stroke="#222" stroke-width="1.5"/><path d="M1761.60,1012.00 L1765.60,1012.00" stroke="#222" stroke-width="2.1"/><path d="M1761.31,1017.95 L1763.64,1019.30" stroke="#222" stroke-width="1.5"/><path d="M1756.95,1022.31 L1758.30,1024.64" stroke="#222" stroke-width="1.5"/><path d="M1751.00,1022.60 L1751.00,1026.60" stroke="#222" stroke-width="2.1"/><path d="M1745.05,1022.31 L1743.70,1024.64" stroke="#222" stroke-width="1.5"/><path d="M1740.69,1017.95 L1738.36,1019.30" stroke="#222" stroke-width="1.5"/><path d="M1740.40,1012.00 L1736.40,1012.00" stroke="#222" stroke-width="2.1"/><path d="M1740.69,1006.05 L1738.36,1004.70" stroke="#222" stroke-width="1.5"/><path d="M1745.05,1001.69 L1743.70,999.36" stroke="#222" stroke-width="1.5"/>
<path d="M1751,1012 L1758.5,1012" stroke="#111" stroke-width="2.6"/>
<path d="M1751,1012 L1753,1000" stroke="#111" stroke-width="1.5"/>
<circle cx="1751" cy="1012" r="1.6" fill="#111"/>
<ellipse cx="1798" cy="1024.5" rx="12" ry="2" fill="#b8b8b8" opacity="0.7"/>
<path d="M1785.5,997.5 H1802.5 L1807.5,1002.5 V1023 H1785.5 Z" fill="#fff" stroke="#c8c8c8" stroke-width="1"/>
<path d="M1802.5,997.5 V1002.5 H1807.5" fill="#e8e8e8" stroke="#c8c8c8" stroke-width="0.8"/>
<g stroke="#c8c8c8" stroke-width="0.8" fill="none">
<path d="M1789.5,1001.5 H1804 M1789.5,1004 H1804 M1789.5,1006.5 H1804 M1789.5,1009 H1804 M1789.5,1011.5 H1804 M1789.5,1014 H1804 M1789.5,1016.5 H1804 M1789.5,1019 H1804"/>
<path d="M1789.5,1001.5 V1019 M1793.5,1001.5 V1019 M1799,1001.5 V1019 M1804,1001.5 V1019"/>
</g>
<path d="M1803.6,1013.6 H1807.4 V1017.6 H1811.4 V1021.4 H1807.4 V1025.4 H1803.6 V1021.4 H1799.6 V1017.6 H1803.6 Z" fill="#b4dc5c" stroke="#7cb834" stroke-width="1.1"/><path d="M1805.5,1015 V1024 M1801,1019.5 H1810" stroke="#d8f0a0" stroke-width="0.8" stroke-dasharray="1 1"/>
<path d="M1837.78,1001.20 L1839.13,1000.76 L1839.39,996.82 L1844.61,996.82 L1844.87,1000.76 L1846.65,1001.37 L1847.92,1002.02 L1850.89,999.43 L1854.57,1003.11 L1851.98,1006.08 L1852.80,1007.78 L1853.24,1009.13 L1857.18,1009.39 L1857.18,1014.61 L1853.24,1014.87 L1852.63,1016.65 L1851.98,1017.92 L1854.57,1020.89 L1850.89,1024.57 L1847.92,1021.98 L1846.22,1022.80 L1844.87,1023.24 L1844.61,1027.18 L1839.39,1027.18 L1839.13,1023.24 L1837.35,1022.63 L1836.08,1021.98 L1833.11,1024.57 L1829.43,1020.89 L1832.02,1017.92 L1831.20,1016.22 L1830.76,1014.87 L1826.82,1014.61 L1826.82,1009.39 L1830.76,1009.13 L1831.37,1007.35 L1832.02,1006.08 L1829.43,1003.11 L1833.11,999.43 L1836.08,1002.02Z" fill="url(#gearg)" stroke="#9aa2a2" stroke-width="0.7"/>
<circle cx="1842" cy="1012" r="8.3" fill="none" stroke="url(#ringg)" stroke-width="3.4"/>
<circle cx="1842" cy="1012" r="5.7" fill="#e4e4e4" stroke="#6e7676" stroke-width="1.1"/>
<path d="M1882.5,1000.5 L1889,1007 L1895.5,1000.5 L1900.5,1005.5 L1894,1012 L1900.5,1018.5 L1895.5,1023.5 L1889,1017 L1882.5,1023.5 L1877.5,1018.5 L1884,1012 L1877.5,1005.5 Z" fill="url(#xg)"/>
</svg>
<div style="position:absolute;left:1685px;top:1002px;font-size:11px;line-height:17px;letter-spacing:0.3px;white-space:nowrap;color:#000">0:00:04</div></body></html>
